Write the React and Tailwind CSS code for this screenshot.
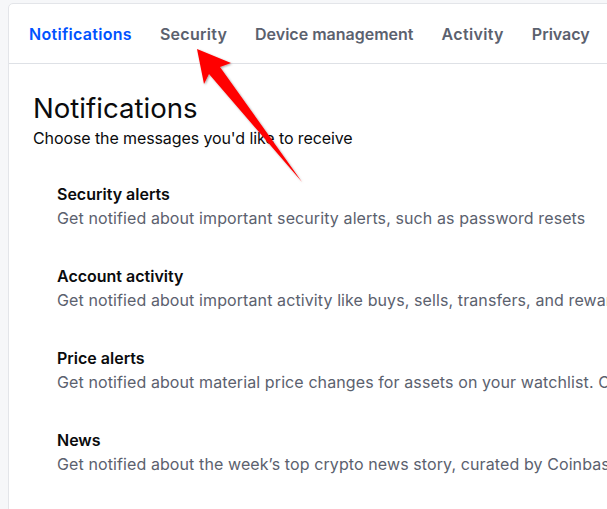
import React from "react";

const tabs = [
  ["Notifications", "tracking-[0.3px]"],
  ["Security", "tracking-[0.25px]"],
  ["Device management", "tracking-[0px]"],
  ["Activity", "tracking-[0.35px]"],
  ["Privacy", "tracking-[0px]"],
];

const items = [
  ["Security alerts", "Get notified about important security alerts, such as password resets"],
  ["Account activity", "Get notified about important activity like buys, sells, transfers, and rewards"],
  ["Price alerts", "Get notified about material price changes for assets on your watchlist. Only for assets"],
  ["News", "Get notified about the week\u2019s top crypto news story, curated by Coinbase"],
];

export default function App() {
  return (
    <div
      className="relative w-[607px] h-[509px] overflow-hidden bg-[#f6f7f9] pt-[3px] pl-[8px]"
      style={{ fontFamily: "Inter, 'Noto Sans', sans-serif" }}
    >
      <div className="w-[640px] h-[560px] bg-white border border-[#e3e5e9] rounded-tl-[5px]">
        <div className="h-[60px] flex items-center gap-[28px] pl-[20px] border-b border-[#dee1e6] whitespace-nowrap">
          {tabs.map(([t, tr], i) => (
            <span
              key={t}
              className={
                "text-[16px] font-semibold " +
                tr +
                " " +
                (i === 0 ? "text-[#0052ff]" : "text-[#5b616e]")
              }
            >
              {t}
            </span>
          ))}
        </div>
        <div className="pl-[24px] pt-[26px]">
          <h1 className="text-[27.6px] leading-[36px] font-normal text-[#0a0b0d]">Notifications</h1>
          <p className="text-[16px] leading-[24px] text-[#0a0b0d] tracking-[-0.1px]">Choose the messages you'd like to receive</p>
          <div className="mt-[15px] pl-[24px]">
            {items.map(([title, desc]) => (
              <div key={title} className="py-[17px] whitespace-nowrap">
                <div className="text-[16px] leading-[24px] font-semibold text-[#0a0b0d]">{title}</div>
                <div className="text-[16px] leading-[24px] text-[#5b616e] tracking-[0.1px]">{desc}</div>
              </div>
            ))}
          </div>
        </div>
      </div>
      <svg
        className="absolute left-0 top-0 pointer-events-none"
        width="607"
        height="509"
        viewBox="0 0 607 509"
      >
        <defs>
          <filter id="sh" x="-20%" y="-20%" width="140%" height="140%">
            <feDropShadow dx="1" dy="1" stdDeviation="1.2" floodColor="#000" floodOpacity="0.35" />
          </filter>
        </defs>
        <polygon
          points="197,49 231,63 220,67 302,182 209,74 204,84"
          fill="#ff0000"
          filter="url(#sh)"
        />
      </svg>
    </div>
  );
}
